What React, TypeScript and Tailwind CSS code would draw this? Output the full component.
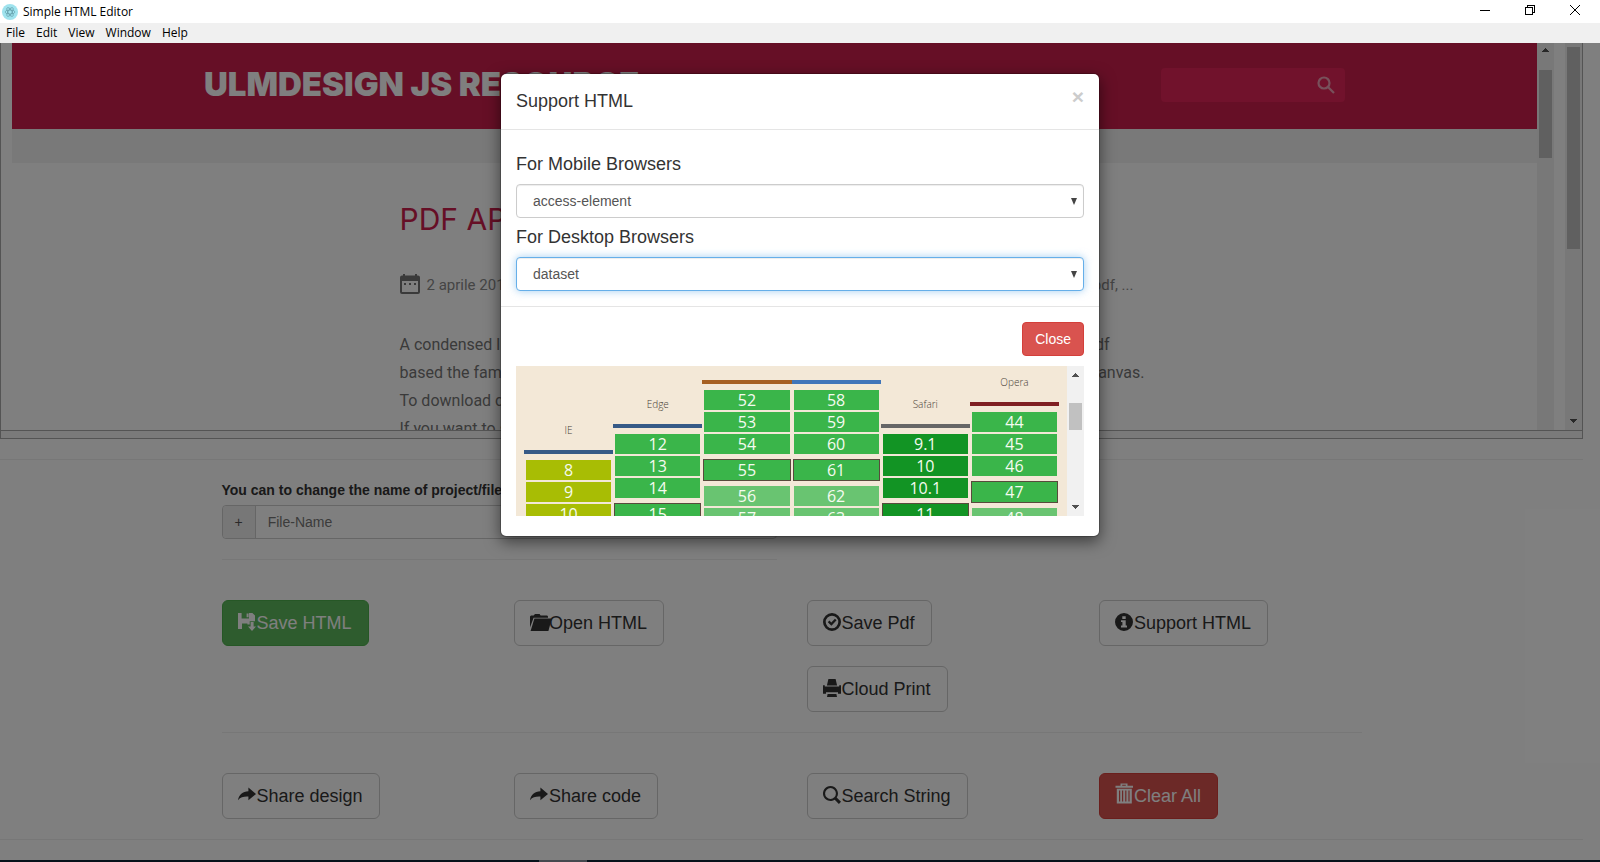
import type { ReactNode } from "react";

const menus = ["File", "Edit", "View", "Window", "Help"];

type Cell = { v: string; current?: boolean; tone: string };
type Browser = { name?: string; bar: string; top: string; cells: Cell[] };

const OK = "bg-[#3ab54a]";
const SOON = "bg-[#69c471]";
const DARK = "bg-[#129424]";
const PART = "bg-[#a8bd04]";

const browsers: Browser[] = [
  {
    name: "IE",
    bar: "bg-[#365a87]",
    top: "pt-[54px]",
    cells: [{ v: "8", tone: PART }, { v: "9", tone: PART }, { v: "10", tone: PART }],
  },
  {
    name: "Edge",
    bar: "bg-[#365a87]",
    top: "pt-[28px]",
    cells: [{ v: "12", tone: OK }, { v: "13", tone: OK }, { v: "14", tone: OK }, { v: "15", tone: OK, current: true }],
  },
  {
    bar: "bg-[#a66022]",
    top: "pt-[14px]",
    cells: [
      { v: "52", tone: OK },
      { v: "53", tone: OK },
      { v: "54", tone: OK },
      { v: "55", tone: OK, current: true },
      { v: "56", tone: SOON },
      { v: "57", tone: SOON },
    ],
  },
  {
    bar: "bg-[#4075b9]",
    top: "pt-[14px]",
    cells: [
      { v: "58", tone: OK },
      { v: "59", tone: OK },
      { v: "60", tone: OK },
      { v: "61", tone: OK, current: true },
      { v: "62", tone: SOON },
      { v: "63", tone: SOON },
    ],
  },
  {
    name: "Safari",
    bar: "bg-[#666666]",
    top: "pt-[28px]",
    cells: [
      { v: "9.1", tone: DARK },
      { v: "10", tone: DARK },
      { v: "10.1", tone: DARK },
      { v: "11", tone: DARK, current: true },
    ],
  },
  {
    name: "Opera",
    bar: "bg-[#7f1f22]",
    top: "pt-[6px]",
    cells: [
      { v: "44", tone: OK },
      { v: "45", tone: OK },
      { v: "46", tone: OK },
      { v: "47", tone: OK, current: true },
      { v: "48", tone: SOON },
    ],
  },
];

function Glyph({ children, wide }: { children: ReactNode; wide?: boolean }) {
  return (
    <span className="inline-flex w-[19px] h-[18px] shrink-0 mb-[3px]">
      <svg
        viewBox={wide ? "0 0 22 18" : "0 0 18 18"}
        className={wide ? "w-[22px] h-[18px] shrink-0" : "w-[18px] h-[18px] overflow-visible"}
        fill="currentColor"
        aria-hidden="true"
      >
        {children}
      </svg>
    </span>
  );
}

const SaveIcon = () => (
  <Glyph>
    <path d="M0 0h3.6v5.400h7.400V0h3.400l2.600 2.600v5.600h-5.300v3.400H9.400v-1H4v5.400H0zM8.600 .6h2v3.600h-2z" fillRule="evenodd" />
    <path d="M12.600 9h3v4.400h2.400l-4 4.600-4-4.600h2.600z" />
  </Glyph>
);

const FolderIcon = () => (
  <Glyph wide>
    <path d="M0 14.500V3.400l1-.9h2.600L5 .9h4.600l1 1.600h6.600l.8 1v1.200H3.600z" />
    <path d="M4.400 5.600h17.400L18.400 18H.6z" />
  </Glyph>
);

const CheckIcon = () => (
  <Glyph>
    <path d="M9 0a9 9 0 1 0 0 18A9 9 0 0 0 9 0zm0 2.700a6.300 6.300 0 1 1 0 12.600A6.300 6.300 0 0 1 9 2.700z" fillRule="evenodd" />
    <path d="M4.800 9.200l1.600-1.600 1.900 1.900 3.600-3.800 1.700 1.500-5.200 5.600z" />
  </Glyph>
);

const InfoIcon = () => (
  <Glyph>
    <path d="M9 0a9 9 0 1 0 0 18A9 9 0 0 0 9 0zM7.300 3.300h3.400v2.600H7.300zM6 7.200h4.700v5.400H12v1.900H6v-1.900h1.400V9H6z" fillRule="evenodd" />
  </Glyph>
);

const PrintIcon = () => (
  <Glyph>
    <path d="M5.400 0h7.200l1.500 6.400H3.900zM0 6.200h1.800v1.400h14.400V6.200H18v8.600h-3v-1.600H3v1.600H0zM4.600 14.900h8.800l.6 3.100H4z" />
  </Glyph>
);

const ShareIcon = () => (
  <Glyph>
    <path d="M10.400 1.500L18 8l-7.600 6.200v-3.600C6 10.400 2.600 11 0 14.200.9 8.600 4.600 5.400 10.400 5.200z" />
  </Glyph>
);

const SearchIcon = () => (
  <Glyph>
    <path d="M7.500 0a7.500 7.500 0 1 0 4.200 13.700l4.200 4.200 2.100-2.100-4.300-4.200A7.500 7.500 0 0 0 7.500 0zm0 2.100a5.400 5.400 0 1 1 0 10.800 5.400 5.400 0 0 1 0-10.800z" fillRule="evenodd" />
  </Glyph>
);

const TrashIcon = () => (
  <Glyph>
    <path d="M5.500-2.500h7v2.300H18V1.800H.5V-.2h5zM7.200-1.200v1h3.600v-1zM1.800 2.800h15V17.500H1.800zm2.200 1.700v11h1.200v-11zm3 0v11h1.200v-11zm3.200 0v11h1.200v-11zm3.200 0v11h1.200v-11z" fillRule="evenodd" />
  </Glyph>
);

function LargeButton({ icon, label, tone = "bg-white border-[#ccc] text-[#333]" }: { icon: ReactNode; label: string; tone?: string }) {
  return (
    <button type="button" className={`flex items-center h-[46px] pl-[15px] pr-4 border rounded-md text-lg ${tone}`}>
      {icon}
      {label}
    </button>
  );
}

function Arrow({ up }: { up?: boolean }) {
  return (
    <svg viewBox="0 0 7 4" className="w-[7px] h-1" fill="#505050" shapeRendering="crispEdges" aria-hidden="true">
      <path d={up ? "M3 0h1v1h1v1h1v1h1v1H0V3h1V2h1V1h1z" : "M0 0h7v1H6v1H5v1H4v1H3V3H2V2H1V1H0z"} />
    </svg>
  );
}

function TitleBar() {
  return (
    <header>
      <div className="flex items-center justify-between h-[23px] bg-white pl-[2px]">
        <div className="flex items-center gap-[5px]">
          <svg viewBox="0 0 16 16" className="w-4 h-4" fill="none" aria-hidden="true">
            <circle cx="8" cy="8" r="8" fill="#9fe3ee" />
            <g stroke="#5b95a1" strokeWidth=".6">
              <ellipse cx="8" cy="8" rx="5" ry="2" />
              <ellipse cx="8" cy="8" rx="5" ry="2" transform="rotate(60 8 8)" />
              <ellipse cx="8" cy="8" rx="5" ry="2" transform="rotate(120 8 8)" />
            </g>
          </svg>
          <span className="text-xs text-black">Simple HTML Editor</span>
        </div>
        <div className="flex h-full pb-[3px] pr-[2px]">
          <button type="button" aria-label="Minimize" className="w-[45px] flex items-center justify-center">
            <svg viewBox="0 0 10 10" className="w-[10px] h-[10px]" stroke="#000" shapeRendering="crispEdges"><path d="M0 5.500h10" /></svg>
          </button>
          <button type="button" aria-label="Restore" className="w-[45px] flex items-center justify-center">
            <svg viewBox="0 0 10 10" className="w-[10px] h-[10px]" stroke="#000" fill="none" shapeRendering="crispEdges"><path d="M.5 2.500h7v7h-7zM2.500 2.500v-2h7v7h-2" /></svg>
          </button>
          <button type="button" aria-label="Close window" className="w-[46px] flex items-center justify-center">
            <svg viewBox="0 0 10 10" className="w-[10px] h-[10px]" stroke="#000"><path d="M0 0l10 10M10 0L0 10" /></svg>
          </button>
        </div>
      </div>
      <nav className="flex items-center gap-[11px] h-5 bg-[#f0f0f0] px-[6px] text-xs text-black">
        {menus.map((m) => (
          <button type="button" key={m}>{m}</button>
        ))}
      </nav>
    </header>
  );
}

function Preview() {
  return (
    <section className="border border-t-0 border-[#a9a9a9] bg-[#f5f5f5] pb-[7px]">
      <div className="flex h-[388px] bg-white border-b border-[#a9a9a9] pl-[11px] overflow-hidden">
        <div className="flex-1 font-[Roboto,sans-serif]">
          <div className="flex items-center justify-between h-[86px] bg-[#cd1e4d] px-[192px]">
            <h1 className="font-[Inter,sans-serif] font-black text-[33px] leading-10 pb-1 text-white">ULMDESIGN JS RESOURCE</h1>
            <div className="flex items-center w-[184px] h-[34px] mb-[2px] rounded bg-[#e22558] pr-[10px]">
              <input type="text" aria-label="Search resources" className="flex-1 min-w-0 bg-transparent outline-none" />
              <svg viewBox="0 0 18 18" className="w-[18px] h-[18px]" stroke="#f0a0b6" strokeWidth="2.200" fill="none" aria-hidden="true">
                <circle cx="7" cy="7" r="5.500" />
                <path d="M11 11l6 6" />
              </svg>
            </div>
          </div>
          <div className="h-[34px] bg-[#f3f3f3]" />
          <article className="w-[750px] mx-auto pt-9">
            <h2 className="font-[Inter,sans-serif] font-normal text-[30px] leading-10 text-[#cd1e4d]">PDF API CANVAS</h2>
            <div className="flex items-center justify-between pt-[34px] text-[15px] leading-6 text-[#8a8a8a]">
              <p className="flex items-center gap-[7px]">
                <svg viewBox="0 0 20 20" className="w-5 h-5 mb-[2px]" fill="#757575" aria-hidden="true">
                  <path d="M3 0h2v1.500h10V0h2v1.500h1a2 2 0 0 1 2 2V18a2 2 0 0 1-2 2H2a2 2 0 0 1-2-2V3.500a2 2 0 0 1 2-2h1zM2 7v11h16V7z" fillRule="evenodd" />
                  <path d="M4 9h2v2H4zM9 9h2v2H9zM14 9h2v2h-2z" />
                </svg>
                2 aprile 2017
              </p>
              <p className="pr-4">canvas, pdf, ...</p>
            </div>
            <div className="pt-[34px] text-base leading-7 text-[#757575]">
              <p className="flex justify-between pr-10"><span>A condensed library</span><span>pdf</span></p>
              <p className="flex justify-between pr-[5px]"><span>based the famous</span><span>canvas.</span></p>
              <p>To download code</p>
              <p>If you want to see</p>
            </div>
          </article>
        </div>
        <div className="flex flex-col items-center w-[17px] bg-[#f1f1f1] pt-[5px]">
          <Arrow up />
          <div className="w-[13px] h-[88px] mt-[18px] bg-[#c1c1c1]" />
        </div>
        <div className="w-[11px]" />
        <div className="flex flex-col items-center justify-between w-[17px] bg-[#f1f1f1] pt-1 pb-[7px]">
          <div className="w-[13px] h-[202px] bg-[#c1c1c1]" />
          <Arrow />
        </div>
      </div>
    </section>
  );
}

function Actions() {
  return (
    <main className="w-[1140px] max-w-full mx-auto text-[#333]">
      <div className="w-[555px] max-w-full border-b border-[#eee] pb-5">
        <label htmlFor="file-name" className="block text-sm leading-5 font-bold mb-[5px]">
          You can to change the name of project/file
        </label>
        <div className="flex h-[34px] border border-[#ccc] rounded text-sm text-[#555]">
          <span className="flex items-center px-3 rounded-l bg-[#eee] border-r border-[#ccc]">+</span>
          <input id="file-name" type="text" placeholder="File-Name" className="flex-1 px-3 rounded-r outline-none placeholder:text-[#777]" />
        </div>
      </div>
      <div className="grid grid-cols-4 gap-x-[30px] pt-10 pb-5 border-b border-[#eee]">
        <div><LargeButton icon={<SaveIcon />} label="Save HTML" tone="bg-[#5cb85c] border-[#4cae4c] text-white" /></div>
        <div><LargeButton icon={<FolderIcon />} label="Open HTML" /></div>
        <div className="flex flex-col items-start gap-5">
          <LargeButton icon={<CheckIcon />} label="Save Pdf" />
          <LargeButton icon={<PrintIcon />} label="Cloud Print" />
        </div>
        <div><LargeButton icon={<InfoIcon />} label="Support HTML" /></div>
      </div>
      <div className="grid grid-cols-4 gap-x-[30px] pt-10 pb-5">
        <div><LargeButton icon={<ShareIcon />} label="Share design" /></div>
        <div><LargeButton icon={<ShareIcon />} label="Share code" /></div>
        <div><LargeButton icon={<SearchIcon />} label="Search String" /></div>
        <div><LargeButton icon={<TrashIcon />} label="Clear All" tone="bg-[#d9534f] border-[#d43f3a] text-white" /></div>
      </div>
    </main>
  );
}

function SupportTable() {
  return (
    <div className="flex h-[150px] overflow-hidden">
      <div className="flex flex-1 bg-[#f3e8d7] px-2 font-['Open_Sans',sans-serif]">
        {browsers.map((b, i) => (
          <div key={i} className={`flex-1 ${b.top}`}>
            {b.name && <div className="h-[30px] leading-5 text-center text-[10px] font-light text-[#4a4238]">{b.name}</div>}
            <div className={`h-1 ${b.bar}`} />
            <div className="flex flex-col gap-[2px] pt-[6px]">
              {b.cells.map((c) => (
                <div
                  key={c.v}
                  className={`text-center text-base leading-5 text-[#f5fbf0] ${c.tone} ${
                    c.current ? "h-[22px] mx-px my-[3px] border border-[#574b3c]" : "h-5 mx-[2px]"
                  }`}
                >
                  {c.v}
                </div>
              ))}
            </div>
          </div>
        ))}
      </div>
      <div className="flex flex-col items-center w-[17px] bg-[#f1f1f1] py-[7px]">
        <Arrow up />
        <div className="w-[13px] h-[27px] mt-[26px] mb-auto bg-[#c1c1c1]" />
        <Arrow />
      </div>
    </div>
  );
}

function Dropdown({ id, label, value, focused }: { id: string; label: string; value: string; focused?: boolean }) {
  return (
    <div className="pt-[9px]">
      <label htmlFor={id} className="block text-lg leading-5 mb-[10px]">{label}</label>
      <div className="relative">
        <select
          id={id}
          defaultValue={value}
          className={`appearance-none block w-full h-[34px] pl-4 pr-6 rounded border bg-white text-sm text-[#555] outline-none ${
            focused
              ? "border-[#66afe9] shadow-[inset_0_1px_1px_rgba(0,0,0,0.075),0_0_8px_rgba(102,175,233,0.6)]"
              : "border-[#ccc] shadow-[inset_0_1px_1px_rgba(0,0,0,0.075)]"
          }`}
        >
          <option>{value}</option>
        </select>
        <svg viewBox="0 0 6 7" className="absolute right-[7px] top-[14px] w-[6px] h-[7px] pointer-events-none" fill="#444" aria-hidden="true">
          <path d="M0 0h6L3 7z" />
        </svg>
      </div>
    </div>
  );
}

function SupportDialog() {
  return (
    <div className="absolute inset-0 bg-black/50 pt-[30px]">
      <div
        role="dialog"
        aria-label="Support HTML"
        className="w-[600px] max-w-full mx-auto bg-white bg-clip-padding border border-black/20 rounded-md shadow-[0_5px_15px_rgba(0,0,0,0.5)] text-[#333]"
      >
        <div className="flex items-start justify-between h-14 px-[15px] pt-[15px] border-b border-[#e5e5e5]">
          <h4 className="text-lg leading-6">Support HTML</h4>
          <button type="button" aria-label="Close dialog" className="text-[21px] leading-4 font-bold text-[#ccc]">×</button>
        </div>
        <div className="p-[15px]">
          <Dropdown id="mobile" label="For Mobile Browsers" value="access-element" />
          <Dropdown id="desktop" label="For Desktop Browsers" value="dataset" focused />
        </div>
        <div className="px-[15px] pt-[15px] pb-5 border-t border-[#e5e5e5]">
          <div className="flex justify-end pb-[10px]">
            <button type="button" className="h-[34px] px-3 rounded border border-[#d43f3a] bg-[#d9534f] text-sm text-white">Close</button>
          </div>
          <SupportTable />
        </div>
      </div>
    </div>
  );
}

export default function App() {
  return (
    <div className="min-h-screen flex flex-col bg-white font-['Liberation_Sans',Arial,sans-serif]">
      <div className="font-['Open_Sans',sans-serif]">
        <TitleBar />
      </div>
      <div className="relative flex-1">
        <div className="pr-[17px]">
          <Preview />
          <div className="mt-5 border-t border-[#eee] pt-5">
            <Actions />
          </div>
          <div className="border-t border-[#eee] h-5" />
        </div>
        <SupportDialog />
      </div>
      {/* Edge of the taskbar */}
      <div className="h-[2px] bg-[#07111a] pl-[539px]">
        <div className="w-12 h-full bg-[#45494f]" />
      </div>
    </div>
  );
}
